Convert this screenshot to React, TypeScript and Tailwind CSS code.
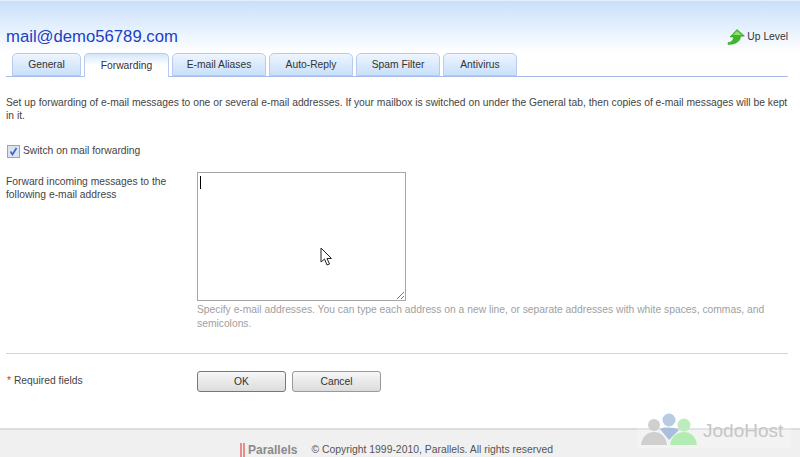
import React from 'react';

const tabs = [
  { label: 'General', width: 'w-[69px]' },
  { label: 'Forwarding', width: 'w-[85px]', active: true },
  { label: 'E-mail Aliases', width: 'w-[94px]' },
  { label: 'Auto-Reply', width: 'w-[84px]' },
  { label: 'Spam Filter', width: 'w-[84px]' },
  { label: 'Antivirus', width: 'w-[74px]' },
];

const UpLevelIcon = () => (
  <svg width="18" height="16" viewBox="0 0 18 16">
    <path
      d="M10 0.5 L17.5 7 L13.5 7.5 C13.5 12 9 15.5 1 15.5 L1 13.5 C4 13.5 6.5 11.5 6.5 8 L3 8 Z"
      fill="#3fb52a"
      stroke="#2f9a20"
      strokeWidth="0.5"
      strokeLinejoin="round"
    />
    <path d="M10 2 L15 6 L11 6 C9 6 7 6 6 6 Z" fill="#8fe070" />
  </svg>
);

const Cursor = () => (
  <svg className="absolute left-[320px] top-[247px]" width="13" height="20" viewBox="0 0 13 20">
    <path
      d="M1 1 L1 15 L4.5 12 L7 18 L9.5 17 L7 11.5 L11.5 11.5 Z"
      fill="#fff"
      stroke="#222"
      strokeWidth="1"
      strokeLinejoin="round"
    />
  </svg>
);

const Watermark = () => (
  <div className="absolute left-[637px] top-[412px] flex h-[36px] w-[154px] items-center bg-white/20">
    <svg width="60" height="36" viewBox="0 0 60 36" className="shrink-0">
      <circle cx="17" cy="13" r="6" fill="#cfcfcf" />
      <path d="M4 33 C5 24 11 20 17 20 C23 20 29 24 30 33 Z" fill="#cfcfcf" />
      <circle cx="32" cy="8" r="6.5" fill="#b9cbe2" />
      <path d="M23 17 C26 15 38 15 42 18 L32 28 Z" fill="#a9bfdc" />
      <circle cx="47" cy="13" r="6.5" fill="#bdecbd" />
      <path d="M33 33 C34 24 41 20 47 20 C53 20 59 24 60 33 Z" fill="#b3ecb3" />
    </svg>
    <span className="ml-[6px] text-[19px] leading-none text-[#c6c6c6]">JodoHost</span>
  </div>
);

export default function App() {
  return (
    <div className="relative flex h-[457px] w-[800px] flex-col overflow-hidden bg-white font-['Liberation_Sans',sans-serif] text-[10.3px] leading-[14px] text-[#444]">
      {/* Header */}
      <div className="h-[53px] border-t border-[#e6f0fd] bg-gradient-to-b from-[#c9e0fb] to-white pl-[6px] pr-[12px] pt-[26px]">
        <div className="flex items-center justify-between">
          <h1 className="text-[16.7px] leading-[19px] text-[#1a3fc4]">mail@demo56789.com</h1>
          <div className="flex items-center gap-[2px] text-[#333]">
            <UpLevelIcon />
            <span>Up Level</span>
          </div>
        </div>
      </div>

      {/* Tabs */}
      <div className="ml-[6px] mr-[12px] flex h-[24px] gap-[3px] border-b border-[#a9b9ea] pl-[6px]">
        {tabs.map((tab) => (
          <div
            key={tab.label}
            className={
              tab.active
                ? `${tab.width} flex h-[24px] items-center justify-center rounded-t-[5px] border border-b-0 border-[#b9c9f0] bg-gradient-to-b from-[#d4e6fb] via-white to-white text-[#333]`
                : `${tab.width} flex h-[23px] items-center justify-center rounded-t-[5px] border border-[#b9c9f0] bg-gradient-to-b from-[#eef5fe] to-[#c8e0fb] text-[#333]`
            }
          >
            {tab.label}
          </div>
        ))}
      </div>

      {/* Form */}
      <div className="flex-1 pl-[6px] pr-[12px] pt-[19px]">
        <p className="leading-[13px]">
          Set up forwarding of e-mail messages to one or several e-mail addresses. If your mailbox is switched on under the General tab, then copies of e-mail messages will be kept in it.
        </p>

        <div className="mt-[22px] flex items-center gap-[3px] pl-[1px]">
          <span className="flex h-[13px] w-[13px] items-center justify-center border border-[#9aa4b4] bg-[#dbe3f0]">
            <svg width="9" height="9" viewBox="0 0 9 9">
              <path d="M1.5 4.5 L3.5 7.5 L7.5 1" fill="none" stroke="#3d5fc0" strokeWidth="1.6" />
            </svg>
          </span>
          <span>Switch on mail forwarding</span>
        </div>

        <div className="mt-[14px] flex">
          <div className="w-[191px] pt-[3px] leading-[13px]">
            Forward incoming messages to the
            <br />
            following e-mail address
          </div>
          <div className="flex-1">
            <div className="relative h-[129px] w-[209px] border border-[#a6a6a6] bg-white">
              <div className="absolute left-[2px] top-[3px] h-[13px] w-px bg-black" />
              <svg className="absolute bottom-0 right-0" width="9" height="9" viewBox="0 0 9 9">
                <path d="M1 8 L8 1 M5 8 L8 5" stroke="#777" strokeWidth="1" />
              </svg>
            </div>
            <p className="mt-[2px] leading-[14px] text-[#a0a0a0]">
              Specify e-mail addresses. You can type each address on a new line, or separate addresses with white spaces, commas, and semicolons.
            </p>
          </div>
        </div>

        <div className="mt-[22px] border-t border-[#d6d6d6]" />

        <div className="mt-[17px] flex">
          <div className="w-[191px] pl-[1px] pt-[3px] text-[#444]">
            <span className="text-[#e8262b]">*</span> Required fields
          </div>
          <div className="flex gap-[6px]">
            <button className="h-[21px] w-[89px] rounded-[3px] border border-[#777] bg-gradient-to-b from-[#f7f7f7] to-[#dcdcdc] text-[#333]">OK</button>
            <button className="h-[21px] w-[89px] rounded-[3px] border border-[#999] bg-gradient-to-b from-[#f7f7f7] to-[#dcdcdc] text-[#333]">Cancel</button>
          </div>
        </div>
      </div>

      {/* Footer */}
      <div className="flex h-[29px] items-end justify-center border-t-2 border-[#dcdcdc] bg-[#f0f0f0] pr-[7px]">
        <span className="mr-[14px] flex items-center">
          <span className="mr-[1px] h-[14px] w-[2px] bg-[#e88c8c]" />
          <span className="mr-[3px] h-[14px] w-[2px] bg-[#e88c8c]" />
          <span className="text-[12px] font-bold text-[#8a8a8a]">Parallels</span>
        </span>
        <span className="text-[10.4px] text-[#555]">© Copyright 1999-2010, Parallels. All rights reserved</span>
      </div>

      <Cursor />
      <Watermark />
    </div>
  );
}
